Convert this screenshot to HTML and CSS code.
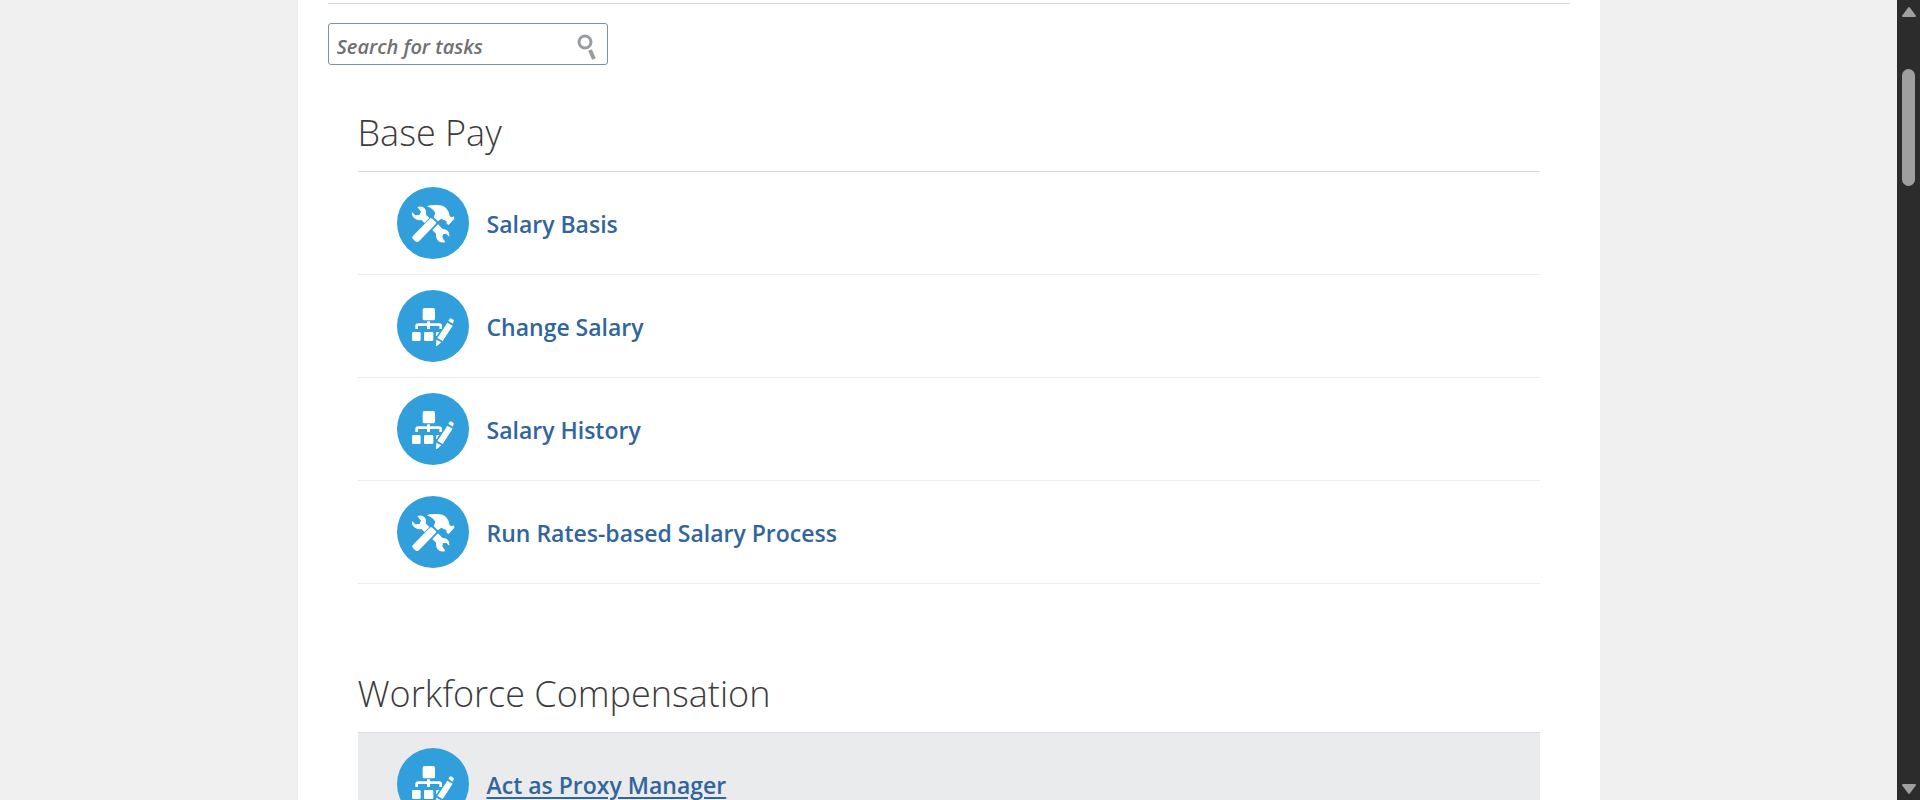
FILE: index.html
```html
<!DOCTYPE html>
<html lang="en">
<head>
<meta charset="utf-8">
<title>Compensation Tasks</title>
<link rel="stylesheet" href="styles.css">
</head>
<body>
<svg class="sprite" aria-hidden="true">
  <symbol id="tools" viewBox="0 0 216 216">
    <circle cx="108" cy="108" r="108" fill="#309fdc"/>
    <path fill="#fff" d="M61 60Q76 56 84 65Q90 72 87 83L100 96L84 110L74 99Q62 102 52 94Q43 86 45 75L55 85L67 84L72 74ZM106 129L123 112L137 126Q149 126 155 135Q158 141 157 149L147 140L138 142L136 151L145 165Q130 170 121 159Q116 151 117 140Z"/>
    <path fill="#fff" stroke="#309fdc" stroke-width="5" paint-order="stroke" d="M100 94Q104 93 107 96L117 105Q119 108 116 111L66 163Q60 168 54 162L47 155Q43 150 48 146Z"/>
    <path fill="#fff" d="M90 58Q98 53 118 54Q137 53 147 63Q156 72 158 88L164 91L171 88L172 95L155 114L149 110L148 102Q139 99 133 95L123 103L110 91L115 78Q108 64 90 58Z"/>
  </symbol>
  <symbol id="org" viewBox="0 0 216 216">
    <circle cx="108" cy="108" r="108" fill="#309fdc"/>
    <g fill="#fff">
      <rect x="77" y="54" width="37" height="37" rx="5"/>
      <rect x="90" y="94" width="9" height="23"/>
      <rect x="45" y="126" width="26" height="27" rx="4"/>
      <rect x="81" y="126" width="28" height="27" rx="4"/>
      <path d="M117 130Q117 126 121 126H127L119 138H117ZM151 98L167 107L137 153L121 144ZM154 92L158 86Q160 84 164 86L169 89Q172 91 170 94L167 101ZM118 149L133 157L120 168H117Z"/>
      <path fill="none" stroke="#fff" stroke-width="8" d="M59 117V108Q59 104 63 104H127Q131 104 131 108V117"/>
    </g>
  </symbol>
</svg>
<div class="page">
  <main class="viewport">
    <div class="panel">
      <form class="search" role="search">
        <input class="search-input" type="text" aria-label="Search for tasks" placeholder="Search for tasks">
        <button class="search-button" type="button" aria-label="Search">
          <svg class="search-icon" viewBox="0 0 20 26" fill="none" stroke="#999da0">
            <circle cx="8" cy="8" r="6" stroke-width="3"/>
            <path d="M13 16L17 25" stroke-width="4"/>
          </svg>
        </button>
      </form>
      <section class="group">
        <h2 class="heading">Base Pay</h2>
        <ul class="tasks">
          <li class="task"><svg class="icon" aria-hidden="true"><use href="#tools"/></svg><a class="link" href="#">Salary Basis</a></li>
          <li class="task"><svg class="icon" aria-hidden="true"><use href="#org"/></svg><a class="link" href="#">Change Salary</a></li>
          <li class="task"><svg class="icon" aria-hidden="true"><use href="#org"/></svg><a class="link" href="#">Salary History</a></li>
          <li class="task"><svg class="icon" aria-hidden="true"><use href="#tools"/></svg><a class="link" href="#">Run Rates-based Salary Process</a></li>
        </ul>
      </section>
      <section class="group">
        <h2 class="heading">Workforce Compensation</h2>
        <ul class="tasks">
          <li class="task task-active"><svg class="icon" aria-hidden="true"><use href="#org"/></svg><a class="link" href="#">Act as Proxy Manager</a></li>
        </ul>
      </section>
    </div>
  </main>
  <div class="scrollbar" aria-hidden="true">
    <svg class="arrow" viewBox="0 0 16 12"><path d="M8 2L14 10H2Z"/></svg>
    <div class="track"><div class="thumb"></div></div>
    <svg class="arrow" viewBox="0 0 16 12"><path d="M2 2H14L8 10Z"/></svg>
  </div>
</div>
</body>
</html>
```
FILE: styles.css
```css
* {
  box-sizing: border-box;
}

body {
  margin: 0;
  background: #f0f0f0;
  font-family: "Open Sans", "Noto Sans", sans-serif;
}

.sprite {
  display: none;
}

.page {
  display: flex;
  height: 100vh;
  overflow: hidden;
}

.viewport {
  flex: 1;
  min-width: 0;
  padding: 0 24px;
  overflow: hidden;
}

.panel {
  max-width: 1302px;
  min-height: 100%;
  margin: 0 auto;
  padding: 3px 30px 0;
  background: #fff;
}

.search {
  display: flex;
  padding-top: 19px;
  border-top: 1px solid #d6dce1;
}

.search-input {
  width: 280px;
  height: 42px;
  padding: 4px 56px 0 8px;
  border: 1px solid #7c93a3;
  border-radius: 3px;
  background: #fff;
  color: #6f7072;
  font: italic 600 20px "Open Sans", "Noto Sans", sans-serif;
}

.search-input::placeholder {
  color: #6f7072;
  opacity: 1;
}

.search-button {
  display: flex;
  align-items: center;
  justify-content: center;
  width: 42px;
  height: 42px;
  margin-left: -42px;
  padding: 6px 0 0;
  border: 0;
  background: none;
}

.search-icon {
  width: 20px;
  height: 26px;
}

.group {
  margin: 0 30px 71px;
}

.group:first-of-type {
  padding-top: 29px;
}

.heading {
  margin: 0;
  padding: 12px 0 11px;
  border-bottom: 1px solid #d6dce1;
  color: #3c3c3e;
  font-size: 36px;
  font-weight: 300;
  line-height: 54px;
}

.tasks {
  margin: 0;
  padding: 0;
  list-style: none;
}

.task {
  display: flex;
  align-items: center;
  gap: 18px;
  padding: 15px 39px;
  border-bottom: 1px solid #ebeced;
}

.task-active {
  background: #eaebec;
}

.icon {
  flex: none;
  width: 72px;
  height: 72px;
}

.link {
  padding-top: 1px;
  color: #32659c;
  font-size: 23px;
  font-weight: 600;
  line-height: 32px;
  text-decoration: none;
}

.task-active .link {
  text-decoration: underline;
  text-decoration-thickness: 2px;
  text-underline-offset: 3px;
}

.scrollbar {
  display: flex;
  flex-direction: column;
  align-items: center;
  width: 23px;
  padding: 5px 0 4px;
  background: #2c2c2c;
}

.arrow {
  width: 16px;
  height: 14px;
  fill: #9f9f9f;
  stroke: #9f9f9f;
  stroke-width: 2;
  stroke-linejoin: round;
}

.track {
  flex: 1;
  padding-top: 50px;
}

.thumb {
  width: 13px;
  height: 117px;
  border-radius: 7px;
  background: #9f9f9f;
}
```
